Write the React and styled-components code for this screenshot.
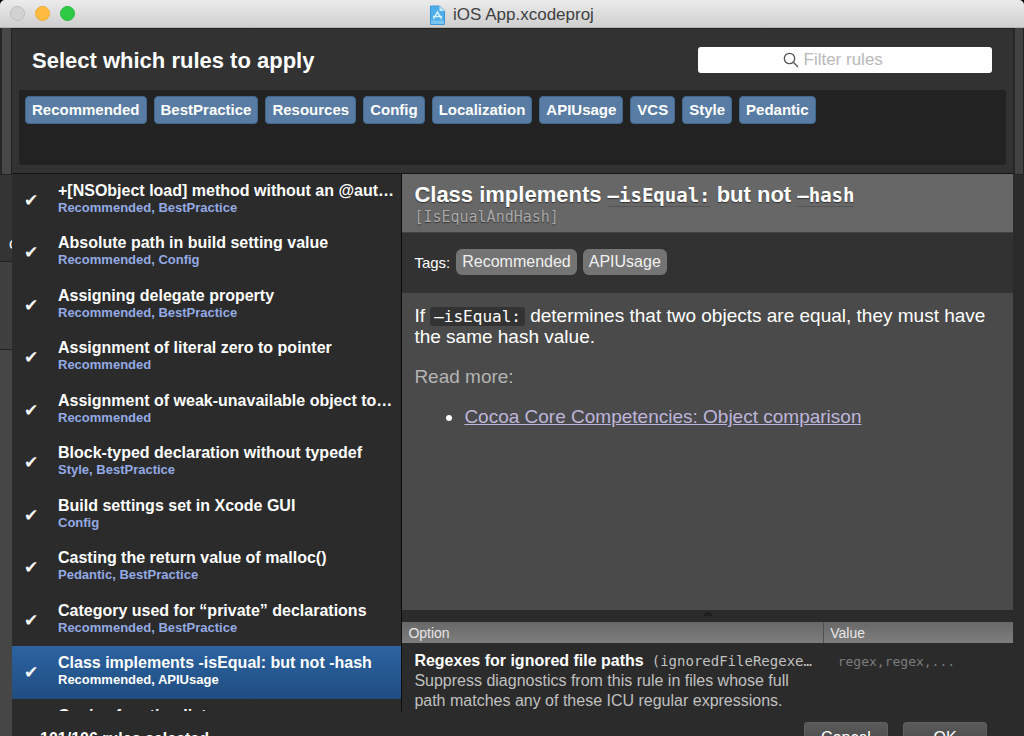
import React from "react";
import styled, { createGlobalStyle } from "styled-components";

const sans = `"Liberation Sans", Arial, sans-serif`;
const mono = `"DejaVu Sans Mono", monospace`;

const GlobalStyle = createGlobalStyle`
  *, *::before, *::after { box-sizing: border-box; }
  body { margin: 0; background: #000; font-family: ${sans}; color: #fff; }
  h1, h2, p, ul { margin: 0; padding: 0; }
  button, input { font-family: inherit; }
`;

const Screen = styled.div`
  height: 100vh;
  overflow: hidden;
`;

const Window = styled.div`
  height: calc(100vh + 24px);
  display: flex;
  flex-direction: column;
  background: #2b2b2b;
  border-radius: 5px 5px 0 0;
  overflow: hidden;
`;

const TitleBar = styled.header`
  flex: none;
  height: 28px;
  display: grid;
  grid-template-columns: 1fr auto 1fr;
  align-items: center;
  padding: 0 10px;
  background: linear-gradient(#ebebeb, #cfcfcf);
  border-bottom: 1px solid #b4b4b4;
`;

const Lights = styled.div`
  display: flex;
  gap: 10px;
`;

const Light = styled.button`
  width: 15px;
  height: 15px;
  padding: 0;
  border-radius: 50%;
  border: 1px solid ${(p) => p.$edge};
  background: ${(p) => p.$fill};
`;

const DocTitle = styled.div`
  display: flex;
  align-items: center;
  gap: 8px;
  padding-top: 2px;
  font-size: 17px;
  line-height: 20px;
  color: #404040;
`;

const Body = styled.div`
  flex: 1;
  min-height: 0;
  display: grid;
  grid-template-columns: 12px minmax(0, 1fr) 11px;
`;

const Gutter = styled.div`
  display: flex;
  flex-direction: column;
  overflow: hidden;
  background: ${(p) => p.$fill};
`;

const GutterBlock = styled.div`
  flex: none;
  height: ${(p) => p.$height}px;
  padding: ${(p) => (p.$padded ? "60px 0 0 9px" : "0")};
  font-size: 16px;
  line-height: 18px;
  background: ${(p) => p.$fill};
  border-bottom: 1px solid #222;
  border-left: ${(p) => (p.$edge ? "2px solid #262626" : "0")};
  border-right: ${(p) => (p.$edge ? "1px solid #222" : "0")};
`;

const Sheet = styled.main`
  display: flex;
  flex-direction: column;
  min-height: 0;
  background: #2b2b2b;
`;

const SheetHeader = styled.section`
  flex: none;
  padding: 0 7px 8px;
  background: #323232;
  border-top: 1px solid #222;
  border-bottom: 1px solid #141414;
`;

const HeadingRow = styled.div`
  height: 61px;
  display: flex;
  align-items: center;
  justify-content: space-between;
  padding: 0 14px 0 13px;
`;

const Heading = styled.h1`
  font-size: 22px;
  line-height: 26px;
  padding-top: 2px;
`;

const Search = styled.label`
  width: 294px;
  height: 26px;
  display: flex;
  align-items: center;
  justify-content: center;
  gap: 5px;
  background: #fff;
  border-radius: 3px;
`;

const SearchInput = styled.input`
  width: 104px;
  height: 24px;
  padding: 0;
  border: 0;
  outline: 0;
  background: transparent;
  font-size: 17px;
  color: #333;
  &::placeholder { color: #b9b9b9; opacity: 1; }
`;

const FilterBox = styled.div`
  min-height: 75px;
  display: flex;
  flex-wrap: wrap;
  align-content: flex-start;
  gap: 7px;
  padding: 6px;
  background: #222;
  border-radius: 3px;
`;

const FilterTag = styled.button`
  height: 28px;
  padding: 0 6px;
  border: 1px solid #41678f;
  border-radius: 4px;
  background: #587ca3;
  color: #fff;
  font-size: 15px;
  font-weight: 700;
  line-height: 18px;
`;

const Panes = styled.div`
  flex: 1;
  min-height: 0;
  display: grid;
  grid-template-columns: 39% minmax(0, 1fr);
`;

const RuleList = styled.ul`
  list-style: none;
  overflow: hidden;
  border-right: 1px solid #0c0c0c;
  border-bottom: 1px solid #2b2b2b;
`;

const RuleItem = styled.li`
  height: 52px;
  display: grid;
  grid-template-columns: 16px minmax(0, 1fr);
  align-items: start;
  column-gap: 18px;
  padding: 8px 6px 0 12px;
  background: ${(p) => (p.$selected ? "linear-gradient(#2c63a1, #204d80)" : "none")};
  &:nth-child(even) { height: 53px; }
`;

const Check = styled.input`
  appearance: none;
  width: 16px;
  height: 18px;
  margin: 9px 0 0;
  color: #fff;
  &:checked::before {
    content: "✔";
    display: block;
    font: 17px/18px "DejaVu Sans", sans-serif;
  }
`;

const RuleLabel = styled.label`
  display: block;
`;

const RuleName = styled.span`
  display: block;
  overflow: hidden;
  text-overflow: ellipsis;
  white-space: nowrap;
  font-size: 16px;
  font-weight: 700;
  line-height: 18px;
`;

const RuleTags = styled.span`
  display: block;
  font-size: 13px;
  font-weight: 700;
  line-height: 15px;
  color: ${(p) => (p.$selected ? "#fff" : "#93aae4")};
`;

const Detail = styled.section`
  min-width: 0;
  min-height: 0;
  display: flex;
  flex-direction: column;
`;

const DetailHead = styled.div`
  flex: none;
  height: 59px;
  padding: 8px 12px 0;
  background: #676767;
  border-bottom: 1px solid #444;
`;

const DetailTitle = styled.h2`
  font-size: 22px;
  line-height: 26px;
  text-shadow: 0 1px 1px #333;
  white-space: nowrap;
`;

const TitleCode = styled.code`
  font-family: ${mono};
  font-size: 19px;
  line-height: 22px;
  border-bottom: 1px solid #555;
`;

const RuleId = styled.code`
  display: block;
  font-family: ${mono};
  font-size: 15px;
  line-height: 18px;
  color: #a9a9a9;
  text-shadow: 0 1px 1px #333;
`;

const TagRow = styled.div`
  flex: none;
  height: 60px;
  display: flex;
  align-items: center;
  gap: 6px;
  padding: 0 12px 2px;
  background: #323232;
  font-size: 15px;
`;

const Tag = styled.span`
  padding: 3px 6px;
  border-radius: 6px;
  background: #747474;
  color: #f0f0f0;
  font-size: 16px;
  line-height: 20px;
`;

const Description = styled.div`
  flex: 1;
  min-height: 0;
  padding: 12px;
  background: #4a4a4a;
  font-size: 19px;
  line-height: 21px;
`;

const InlineCode = styled.code`
  padding: 0 4px;
  border-radius: 3px;
  background: #333;
  font-family: ${mono};
  font-size: 16px;
  line-height: 18px;
`;

const ReadMore = styled.p`
  padding: 19px 0;
  color: #b4b4b4;
`;

const Links = styled.ul`
  padding-left: 50px;
`;

const DocLink = styled.a`
  color: #beb5dc;
`;

const Splitter = styled.div`
  flex: none;
  height: 12px;
  display: flex;
  justify-content: center;
  background: #2b2b2b;
  &::after {
    content: "";
    width: 8px;
    height: 4px;
    margin-top: 2px;
    border-radius: 4px 4px 0 0;
    background: #1e1e1e;
  }
`;

const OptionTable = styled.table`
  width: 100%;
  height: 90px;
  flex: none;
  table-layout: fixed;
  border-collapse: collapse;
  text-align: left;
`;

const HeadCell = styled.th`
  width: ${(p) => p.$width};
  height: 21px;
  padding: 0 6px;
  background: linear-gradient(#686868, #7d7d7d);
  border-left: ${(p) => (p.$divided ? "1px solid #505050" : "0")};
  color: #e6e6e6;
  font-size: 14px;
  font-weight: 400;
  line-height: 20px;
`;

const Cell = styled.td`
  padding: ${(p) => (p.$value ? "8px 14px 0" : "8px 9px 0 12px")};
  vertical-align: top;
  font-size: 16px;
  line-height: 20px;
  color: #c0c0c0;
`;

const OptionName = styled.div`
  height: 20px;
  overflow: hidden;
  text-overflow: ellipsis;
  white-space: nowrap;
  font-family: ${mono};
  font-size: 14px;
`;

const Strong = styled.strong`
  margin-right: 8px;
  color: #fff;
  font-family: ${sans};
  font-size: 16px;
`;

const Code = styled.code`
  font-family: ${mono};
  font-size: ${(p) => (p.$muted ? 13 : 14)}px;
  color: ${(p) => (p.$muted ? "#7c7c7c" : "inherit")};
`;

const Footer = styled.footer`
  flex: none;
  height: 48px;
  display: flex;
  align-items: flex-start;
  gap: 15px;
  padding: 10px 26px 0 28px;
`;

const Count = styled.span`
  flex: 1;
  padding-top: 7px;
  font-size: 16px;
  font-weight: 700;
  line-height: 20px;
`;

const Action = styled.button`
  width: 84px;
  height: 32px;
  padding: 0;
  border: 1px solid #606060;
  border-radius: 3px;
  background: linear-gradient(#5a5a5a, #444);
  color: #fff;
  font-size: 16px;
`;

const filters = [
  "Recommended", "BestPractice", "Resources", "Config", "Localization",
  "APIUsage", "VCS", "Style", "Pedantic",
];

const rules = [
  ["+[NSObject load] method without an @autoreleasepool", "Recommended, BestPractice"],
  ["Absolute path in build setting value", "Recommended, Config"],
  ["Assigning delegate property", "Recommended, BestPractice"],
  ["Assignment of literal zero to pointer", "Recommended"],
  ["Assignment of weak-unavailable object to weak variable", "Recommended"],
  ["Block-typed declaration without typedef", "Style, BestPractice"],
  ["Build settings set in Xcode GUI", "Config"],
  ["Casting the return value of malloc()", "Pedantic, BestPractice"],
  ["Category used for “private” declarations", "Recommended, BestPractice"],
  ["Class implements -isEqual: but not -hash", "Recommended, APIUsage"],
  ["Copies function list", ""],
];
const selectedIndex = 9;

const ProjectIcon = () => (
  <svg width="15" height="20" viewBox="0 0 15 20" aria-hidden="true">
    <path d="M.5 1h9l5 5v13.500H.5z" fill="#4eaeea" stroke="#3d97d6" />
    <path d="M9.500 1v5h5z" fill="#c4e8fb" />
    <path d="M1 15.500h13v3.500H1z" fill="#7cc4f1" />
    <path d="M3.500 14l4-7 4 7M3 11.500h9" fill="none" stroke="#d9f0fd" strokeWidth="1.500" />
  </svg>
);

const SearchIcon = () => (
  <svg width="16" height="16" viewBox="0 0 16 16" fill="none" stroke="#555" strokeWidth="1.300" aria-hidden="true">
    <circle cx="6.500" cy="6.500" r="5.200" />
    <path d="M10.300 10.300l4.700 4.700" />
  </svg>
);

export default function App() {
  return (
    <Screen>
      <GlobalStyle />
      <Window>
        <TitleBar>
          <Lights>
            <Light aria-label="Close" $fill="#d2d2d2" $edge="#bcbcbc" />
            <Light aria-label="Minimize" $fill="#fdbc40" $edge="#eeaa35" />
            <Light aria-label="Zoom" $fill="#2fca44" $edge="#28b93b" />
          </Lights>
          <DocTitle><ProjectIcon />iOS App.xcodeproj</DocTitle>
        </TitleBar>
        <Body>
          <Gutter $fill="#464646">
            <GutterBlock $height={147} $fill="#474747" $edge />
            <GutterBlock $height={87} $fill="#343434" $padded>c</GutterBlock>
            <GutterBlock $height={88} $fill="#404040" />
          </Gutter>
          <Sheet>
            <SheetHeader>
              <HeadingRow>
                <Heading>Select which rules to apply</Heading>
                <Search>
                  <SearchIcon />
                  <SearchInput type="text" placeholder="Filter rules" aria-label="Filter rules" />
                </Search>
              </HeadingRow>
              <FilterBox>
                {filters.map((f) => <FilterTag key={f}>{f}</FilterTag>)}
              </FilterBox>
            </SheetHeader>
            <Panes>
              <RuleList>
                {rules.map(([name, tags], i) => (
                  <RuleItem key={name} $selected={i === selectedIndex}>
                    <Check type="checkbox" id={`rule-${i}`} defaultChecked />
                    <RuleLabel htmlFor={`rule-${i}`}>
                      <RuleName>{name}</RuleName>
                      <RuleTags $selected={i === selectedIndex}>{tags}</RuleTags>
                    </RuleLabel>
                  </RuleItem>
                ))}
              </RuleList>
              <Detail>
                <DetailHead>
                  <DetailTitle>
                    Class implements <TitleCode>–isEqual:</TitleCode> but not <TitleCode>–hash</TitleCode>
                  </DetailTitle>
                  <RuleId>[IsEqualAndHash]</RuleId>
                </DetailHead>
                <TagRow>
                  Tags:
                  <Tag>Recommended</Tag>
                  <Tag>APIUsage</Tag>
                </TagRow>
                <Description>
                  <p>
                    If <InlineCode>–isEqual:</InlineCode> determines that two objects are equal, they must have the same hash value.
                  </p>
                  <ReadMore>Read more:</ReadMore>
                  <Links>
                    <li><DocLink href="#comparison">Cocoa Core Competencies: Object comparison</DocLink></li>
                  </Links>
                </Description>
                <Splitter />
                <OptionTable>
                  <thead>
                    <tr>
                      <HeadCell $width="69%">Option</HeadCell>
                      <HeadCell $width="31%" $divided>Value</HeadCell>
                    </tr>
                  </thead>
                  <tbody>
                    <tr>
                      <Cell>
                        <OptionName>
                          <Strong>Regexes for ignored file paths</Strong>
                          <Code>(ignoredFileRegexes)</Code>
                        </OptionName>
                        Suppress diagnostics from this rule in files whose full path matches any of these ICU regular expressions.
                      </Cell>
                      <Cell $value><Code $muted>regex,regex,...</Code></Cell>
                    </tr>
                  </tbody>
                </OptionTable>
              </Detail>
            </Panes>
            <Footer>
              <Count>101/106 rules selected</Count>
              <Action>Cancel</Action>
              <Action>OK</Action>
            </Footer>
          </Sheet>
          <Gutter $fill="#2b2b2b">
            <GutterBlock $height={147} $fill="#424242" $edge />
          </Gutter>
        </Body>
      </Window>
    </Screen>
  );
}
